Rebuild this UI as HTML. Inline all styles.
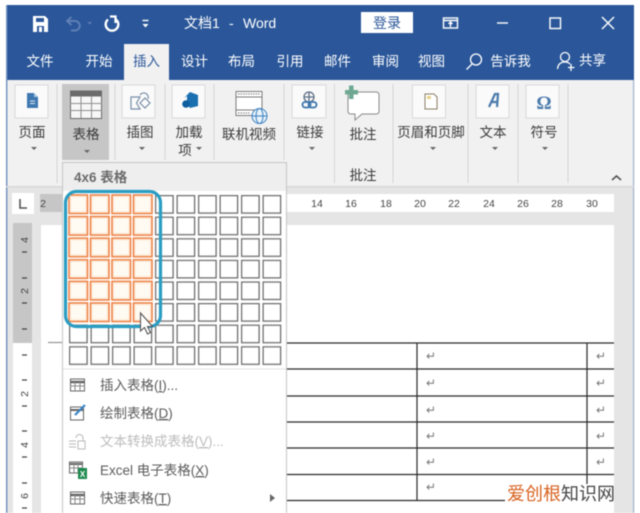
<!DOCTYPE html>
<html><head><meta charset="utf-8"><style>
html,body{margin:0;padding:0;background:#fff;width:640px;height:513px;overflow:hidden}
svg{display:block;filter:blur(0.55px)}
text{font-family:"Liberation Sans","Noto Sans CJK SC",sans-serif}
.t{font-size:13.5px;fill:#fff;text-anchor:middle}
.r{font-size:13.5px;fill:#3a3a3a;text-anchor:middle}
.m{font-size:13.5px;fill:#5c5c5c}
.n{font-size:10.5px;fill:#444;text-anchor:middle}
.ret{font-size:12px;fill:#777;text-anchor:middle;font-family:"DejaVu Sans",sans-serif}
.box{fill:#fafafa;stroke:#d8d8d8}
.sep{stroke:#d6d6d6}
.tk{stroke:#444;stroke-width:1.3}
.ln{stroke:#2a2a2a;stroke-width:1.2}
</style></head><body>
<svg width="640" height="513" viewBox="0 0 640 513" xmlns="http://www.w3.org/2000/svg">
<defs>
<pattern id="c" x="69" y="195" width="21.5" height="21.6" patternUnits="userSpaceOnUse"><rect x=".6" y=".6" width="17.5" height="17.5" fill="#fff" stroke="#6e6e6e" stroke-width="1.3"/></pattern>
<pattern id="o" x="68" y="194" width="21.5" height="21.6" patternUnits="userSpaceOnUse"><rect x="0" y="0" width="21.5" height="21.6" fill="#fff"/><rect x="1" y="1" width="18.5" height="18.5" fill="#fffaf2" stroke="#ec7d3e" stroke-width="1.5"/><rect x="2.600" y="2.600" width="15.300" height="15.300" fill="none" stroke="#fde6d0" stroke-width="1"/></pattern>
</defs>
<rect width="640" height="513" fill="#fff"/>
<!-- window -->
<rect x="6" y="5" width="628" height="508" fill="#e5e5e5"/>
<rect x="6" y="5" width="628" height="75" fill="#2b579a"/>
<rect x="6" y="80" width="628" height="106" fill="#f1f1f1"/>
<rect x="6" y="5" width="1.4" height="508" fill="#6f8fc0"/>
<rect x="633" y="80" width="1.2" height="433" fill="#9fb2cf"/>
<rect x="6" y="186" width="628" height="1.5" fill="#d8d8d8"/>
<!-- title bar -->
<path d="M33 16H45L48 19V32H33Z" fill="#fff"/>
<path d="M36 18H44V22H36Z" fill="#2b579a"/>
<path d="M37 26H44V32H37Z" fill="#2b579a"/><rect x="39" y="27" width="3" height="5" fill="#fff"/>
<g fill="none" stroke="#fff">
<path d="M108 19.500A6.300 6.300 0 1 0 116 19.500" stroke-width="2.400"/><path d="M110 16.500H115.500V23" stroke-width="2.200"/>
<path d="M142.500 20.500H148.500" stroke-width="1.400"/>
</g>
<path d="M142.500 24H148.500L145.500 27.500Z" fill="#fff"/>
<g fill="none" stroke="#5f7fb5" stroke-width="1.9"><path d="M68 21H75A4.700 4.700 0 0 1 75 30.500H71"/><path d="M71.500 17L67 21L71.500 25"/></g>
<path d="M87.500 22H92L89.750 24.500Z" fill="#5f7fb5"/>
<text x="184" y="28" font-size="14" fill="#fff">文档1</text>
<text x="229" y="28" font-size="14" fill="#fff">-</text>
<text x="243" y="28" font-size="14" fill="#fff">Word</text>
<rect x="361" y="12" width="52" height="21" fill="#fff"/>
<text x="387" y="28" font-size="14" fill="#2b579a" text-anchor="middle">登录</text>
<g fill="none" stroke="#fff" stroke-width="1.4">
<rect x="443.500" y="18" width="14" height="10"/><path d="M444 20.500H457M450.500 22V27M448.500 24L450.500 22L452.500 24"/>
<path d="M497 23H508"/>
<rect x="550" y="18" width="10.500" height="10.500"/>
<path d="M602 17L614 29M614 17L602 29"/>
</g>
<!-- tabs -->
<rect x="124" y="44" width="45" height="36" fill="#f1f1f1"/>
<g class="tabs">
<text class="t" x="40" y="66">文件</text>
<text class="t" x="99" y="66">开始</text>
<text class="t" x="146.500" y="66" style="fill:#2b579a">插入</text>
<text class="t" x="194.500" y="66">设计</text>
<text class="t" x="241.500" y="66">布局</text>
<text class="t" x="290" y="66">引用</text>
<text class="t" x="337.500" y="66">邮件</text>
<text class="t" x="385.500" y="66">审阅</text>
<text class="t" x="431.500" y="66">视图</text>
<text class="t" x="510.500" y="66">告诉我</text>
<text class="t" x="592.500" y="65">共享</text>
</g>
<g fill="none" stroke="#fff" stroke-width="1.3">
<circle cx="476" cy="59.500" r="5.500"/><path d="M472 64L466.500 69.500"/>
<circle cx="565" cy="57" r="4.500"/><path d="M557.500 69C558 64 561 62 565 62C567 62 569 63 570 64M571 64V71M568 67.500H574.500"/>
</g>
<!-- ribbon boxes -->
<rect class="box" x="15" y="85" width="33" height="33"/>
<rect x="62" y="84" width="47" height="76" fill="#c6c6c6"/>
<rect class="box" x="122" y="85" width="33" height="33"/>
<rect class="box" x="172" y="85" width="33" height="33"/>
<rect class="box" x="292" y="85" width="34" height="33"/>
<rect class="box" x="412.500" y="85" width="33" height="33"/>
<rect class="box" x="476" y="85" width="33" height="33"/>
<rect class="box" x="526" y="85" width="33" height="33"/>
<path class="sep" d="M57 84V183M115 84V160M165 84V160M214 84V160M284 84V160M334.500 84V183M393 84V183M468 84V183M518 84V183M568 84V183"/>
<!-- ribbon icons -->
<path d="M27 93H34L38 97V108H27Z" fill="#3f78b0"/><path d="M34 93V97H38" fill="#a9c6e0"/><path d="M30 101H35M30 103.500H35" stroke="#dbe8f3" stroke-width="1"/>
<rect x="70.500" y="91" width="31" height="27.500" fill="#f7f7f7" stroke="#6b6b6b"/><rect x="70" y="90.500" width="32" height="6" fill="#6b6b6b"/>
<path d="M70 103.500H102M70 110.500H102M81 96V118M91.500 96V118" stroke="#8e8e8e" fill="none"/>
<g fill="none" stroke="#7a8fa8" stroke-width="1.2"><path d="M131 97H140L136.500 103 140 109H131Z"/><path d="M140 95A4.500 4.500 0 0 1 148 99"/><path d="M140 103L145 98L150 103L145 108Z"/></g>
<path d="M190 92L198 95V106L190 108 187 104V96L184 98Z" fill="#1a6fb0"/><circle cx="186" cy="104" r="3.800" fill="#0e5d9e"/>
<g fill="none" stroke="#7a7a7a"><rect x="236" y="91.500" width="26" height="24" fill="#fff"/><path d="M236 97H262M236 110H256" /><path d="M238 94H260M238 113H250" stroke-dasharray="1.500 1"/></g>
<g fill="#e8f2fa" stroke="#3a7fc0"><circle cx="259.500" cy="116" r="7.500"/><ellipse cx="259.500" cy="116" rx="3.500" ry="7.500" fill="none"/><path d="M252 116H267" fill="none"/></g>
<g fill="none" stroke="#5e6f86" stroke-width="1.3"><circle cx="309" cy="97" r="5"/><path d="M304 97H314M309 92V102"/></g>
<g fill="none" stroke="#3d75ad" stroke-width="1.800"><rect x="302.500" y="102" width="8" height="5.500" rx="2.700"/><rect x="308.500" y="102" width="8" height="5.500" rx="2.700"/></g>
<path d="M348 92H376Q379 92 379 95V111Q379 114 376 114H362L355 120V114H351Q348 114 348 111Z" fill="#fff" stroke="#8a8a8a"/>
<path d="M349 85.500H353.500V90H358V94.500H353.500V99H349V94.500H345V90H349Z" fill="#6ea893"/>
<path d="M425 94H434L437 97V109H425Z" fill="#fff" stroke="#8a7d66"/><rect x="427" y="96" width="4" height="3" fill="#e7d28c"/>
<path d="M489 107L495 94H498L497 107M491 102H497" fill="none" stroke="#4b7bac" stroke-width="2.200"/>
<text x="544" y="109" font-size="19" font-weight="bold" fill="#4b7bac" text-anchor="middle" style="font-family:'Liberation Serif',serif">Ω</text>
<!-- ribbon labels -->
<g>
<text class="r" x="32" y="137">页面</text>
<text class="r" x="86" y="139">表格</text>
<text class="r" x="140" y="137">插图</text>
<text class="r" x="189" y="137">加载</text>
<text class="r" x="185" y="155">项</text>
<text class="r" x="249" y="139">联机视频</text>
<text class="r" x="310" y="137">链接</text>
<text class="r" x="363" y="139">批注</text>
<text class="r" x="431" y="137">页眉和页脚</text>
<text class="r" x="493" y="137">文本</text>
<text class="r" x="544" y="137">符号</text>
<text class="r" x="363" y="180">批注</text>
</g>
<path d="M31 147H37L34 150ZM84 150H90L87 153ZM139 147H145L142 150ZM196 147H202L199 150ZM309 147H315L312 150ZM430 147H436L433 150ZM492 147H498L495 150ZM542 147H548L545 150Z" fill="#666"/>
<path d="M612 180L616.500 176L621 180" fill="none" stroke="#555" stroke-width="1.600"/>
<!-- rulers -->
<rect x="12" y="193" width="22" height="21" fill="#fff"/>
<path d="M20 199V208H27" fill="none" stroke="#555" stroke-width="1.600"/>
<rect x="40" y="194" width="574" height="18" fill="#fff"/>
<rect x="40" y="194" width="24" height="18" fill="#c6c6c6"/>
<text class="n" x="43" y="207">2</text>
<text class="n" x="317" y="207">14</text><text class="n" x="351" y="207">16</text><text class="n" x="386" y="207">18</text><text class="n" x="420" y="207">20</text><text class="n" x="454" y="207">22</text><text class="n" x="489" y="207">24</text><text class="n" x="523" y="207">26</text><text class="n" x="557" y="207">28</text><text class="n" x="592" y="207">30</text>
<rect x="13" y="223" width="19" height="120" fill="#c6c6c6"/>
<rect x="13" y="343" width="19" height="170" fill="#fff"/>
<rect x="41" y="225" width="573" height="288" fill="#fff"/>
<path class="tk" d="M22 252H27M22 278H27M22 303H27M22 329H27M22 355H27M22 380H27M22 406H27M22 431H27M22 457H27M22 483H27M22 508H27"/>
<text class="n" transform="translate(28,240) rotate(-90)" text-anchor="middle">4</text>
<text class="n" transform="translate(28,291) rotate(-90)" text-anchor="middle">2</text>
<text class="n" transform="translate(28,394) rotate(-90)" text-anchor="middle">2</text>
<text class="n" transform="translate(28,445) rotate(-90)" text-anchor="middle">4</text>
<text class="n" transform="translate(28,496) rotate(-90)" text-anchor="middle">6</text>
<!-- table -->
<path class="ln" d="M48 342.500H63" stroke-opacity=".5"/>
<path class="ln" d="M287 343H614M287 369H614M287 396H614M287 422H614M287 448H614M287 474.500H614M287 500.500H505M417 343V500.500M587 343V484"/>
<g class="ret">
<text x="431" y="360">↵</text><text x="431" y="387">↵</text><text x="431" y="414">↵</text><text x="431" y="440">↵</text><text x="431" y="466">↵</text><text x="431" y="491">↵</text>
<text x="601" y="360">↵</text><text x="601" y="387">↵</text><text x="601" y="414">↵</text><text x="601" y="440">↵</text><text x="601" y="466">↵</text>
</g>
<text x="507" y="500" font-size="18" fill="#d8621f">爱创根<tspan fill="#444">知识网</tspan></text>
<!-- menu -->
<rect x="62.500" y="162.500" width="224" height="352" fill="#fff" stroke="#c4c4c4"/>
<rect x="63" y="163" width="223" height="28" fill="#eeeeee"/>
<text x="74" y="182" font-size="13.500" font-weight="bold" fill="#6a6a6a">4x6 表格</text>
<rect x="69" y="195" width="215" height="172" fill="url(#c)"/>
<rect x="68" y="194" width="86" height="129.600" fill="url(#o)"/>
<rect x="65.500" y="191.500" width="95" height="135" rx="11" fill="none" stroke="#2a9dc2" stroke-width="3.200"/>
<path d="M140.500 313V331L144.500 327.500L147.500 334L150.500 332.500L147.500 326.500H152.500Z" fill="#fff" stroke="#555" stroke-width="1.100"/>
<path d="M63 369H286" stroke="#e2e2e2"/>
<!-- menu icons -->
<g fill="none" stroke="#666"><rect x="70.500" y="379" width="14" height="12" fill="#fff"/><path d="M70 382H85" stroke-width="2.500"/><path d="M70 386H85M75 382V391M80 382V391" stroke="#888"/></g>
<g fill="none" stroke="#666"><rect x="70.500" y="407" width="13" height="13" fill="#fff"/><path d="M70 410H84" stroke-width="2"/><path d="M75 415L85 405" stroke="#3a86c8" stroke-width="2.200"/></g>
<g fill="none" stroke="#b9b9b9"><path d="M69 441H76M69 444H76M69 447H76"/><rect x="78" y="441" width="7" height="8"/><path d="M76 438A3.500 3.500 0 0 1 83 438V441"/></g>
<g fill="none" stroke="#666"><rect x="69.500" y="462" width="13" height="11" fill="#fff"/><path d="M69 464H83" stroke-width="2"/><path d="M69 468H83M74 464V473M78 464V473" stroke="#888"/></g>
<rect x="78" y="468" width="9" height="11" fill="#1f8a50"/><text x="82.500" y="477" font-size="8" font-weight="bold" fill="#fff" text-anchor="middle">X</text>
<g fill="none" stroke="#666"><rect x="70.500" y="492" width="14" height="12" fill="#fff"/><path d="M70 495H85" stroke-width="2.500"/><path d="M70 499H85M75 495V504M80 495V504" stroke="#888"/></g>
<!-- menu labels -->
<text class="m" x="100" y="390">插入表格(<tspan text-decoration="underline">I</tspan>)...</text>
<text class="m" x="100" y="418">绘制表格(<tspan text-decoration="underline">D</tspan>)</text>
<text class="m" x="100" y="446" style="fill:#bdbdbd">文本转换成表格(<tspan text-decoration="underline">V</tspan>)...</text>
<text class="m" x="100" y="475">Excel 电子表格(<tspan text-decoration="underline">X</tspan>)</text>
<text class="m" x="100" y="503">快速表格(<tspan text-decoration="underline">T</tspan>)</text>
<path d="M270 494L275 498L270 502Z" fill="#666"/>
</svg>
</body></html>
